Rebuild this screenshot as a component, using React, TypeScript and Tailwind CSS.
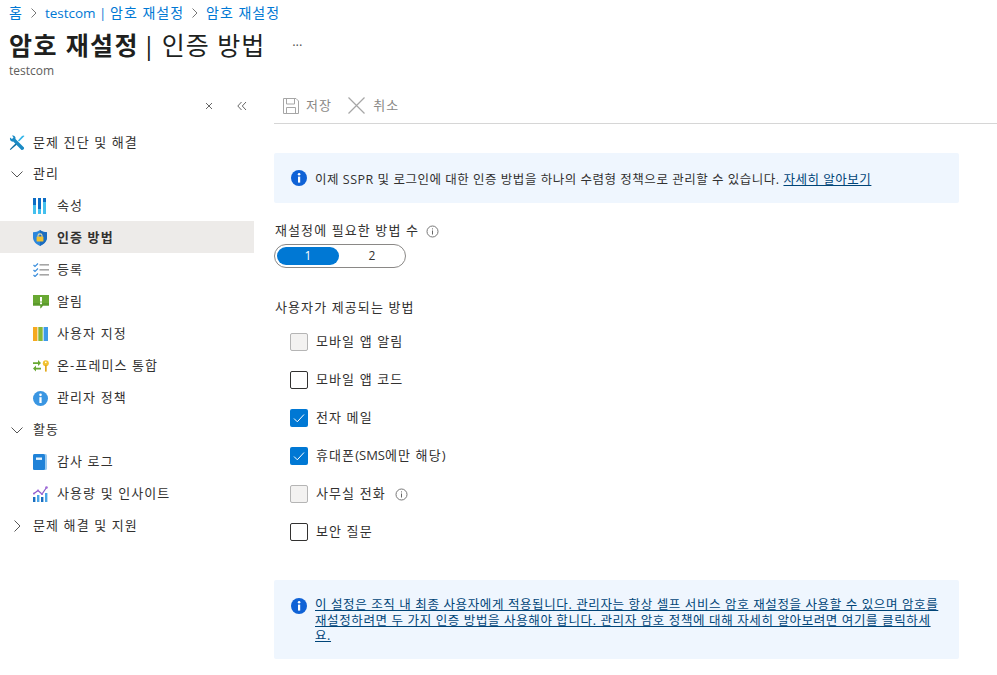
import { ReactNode } from "react";

const font = { fontFamily: '"Open Sans", "Noto Sans CJK KR", sans-serif' };

const InfoCircle = () => (
  <svg width="16" height="16" viewBox="0 0 16 16" className="shrink-0">
    <circle cx="8" cy="8" r="8" fill="#0f62d6" />
    <rect x="7" y="6.6" width="2.2" height="6" fill="#fff" />
    <circle cx="8.1" cy="4.2" r="1.3" fill="#fff" />
  </svg>
);

const SmallInfo = () => (
  <svg width="13" height="13" viewBox="0 0 13 13" className="shrink-0">
    <circle cx="6.5" cy="6.5" r="5.5" fill="none" stroke="#777" />
    <rect x="6" y="5.5" width="1" height="4" fill="#666" />
    <rect x="6" y="3.4" width="1" height="1" fill="#666" />
  </svg>
);

const Tools = () => (
  <svg width="16" height="16" viewBox="0 0 16 16">
    <path d="M1.5 15 L0.8 14.2 L7 8 L8.2 9.2 Z" fill="#0b6a9e" />
    <path d="M10 6.5 L14 2.5 L15.5 1 L14.5 0.5 L13 1 L9 5.5 Z" fill="#30b4e8" />
    <path d="M1 2.5 L3 4 L4.5 2.5 L3 .6 C5 0 7 1.5 6.5 4 L15 12.5 C15.5 14 14 15.5 12.5 15 L4.2 6.6 C2 7 .5 5 1 2.5 Z" fill="#1a8ac4" />
  </svg>
);

const Bars = () => (
  <svg width="13" height="16" viewBox="0 0 13 16">
    <rect x="0" y="0" width="3" height="16" fill="#0c6cc4" />
    <rect x="0" y="7" width="3" height="9" fill="#44c0ee" />
    <rect x="5" y="0" width="3" height="16" fill="#0c6cc4" />
    <rect x="5" y="11" width="3" height="5" fill="#44c0ee" />
    <rect x="10" y="0" width="3" height="16" fill="#0c6cc4" />
    <rect x="10" y="4" width="3" height="12" fill="#44c0ee" />
  </svg>
);

const Shield = () => (
  <svg width="14" height="16" viewBox="0 0 14 16">
    <path d="M7 0 C9 1.6 11 2.2 14 2.2 V7.5 C14 11.5 10.5 14.5 7 16 C3.5 14.5 0 11.5 0 7.5 V2.2 C3 2.2 5 1.6 7 0 Z" fill="#2b86dc" />
    <path d="M7 0 C9 1.6 11 2.2 14 2.2 V7.5 C14 11.5 10.5 14.5 7 16 Z" fill="#1b6cc0" />
    <rect x="3.6" y="6.6" width="6.8" height="5" rx="0.5" fill="#f2c230" />
    <path d="M5 6.8 V5.4 C5 3.4 9 3.4 9 5.4 V6.8" fill="none" stroke="#e8d9a0" strokeWidth="1.1" />
  </svg>
);

const CheckList = () => (
  <svg width="16" height="14" viewBox="0 0 16 14">
    <path d="M.5 2 L2 3.5 L5 .5 M.5 7 L2 8.5 L5 5.5 M.5 12 L2 13.5 L5 10.5" fill="none" stroke="#3c8fdc" strokeWidth="1.2" />
    <rect x="6.5" y="1" width="9.5" height="1.6" fill="#a6a6a6" />
    <rect x="6.5" y="6" width="9.5" height="1.6" fill="#a6a6a6" />
    <rect x="6.5" y="11" width="9.5" height="1.6" fill="#a6a6a6" />
  </svg>
);

const Alert = () => (
  <svg width="16" height="14" viewBox="0 0 16 14">
    <path d="M0 0 H16 V10.5 H10 L7.5 13.5 V10.5 H0 Z" fill="#68a832" />
    <path d="M0 8 H16 V10.5 H10 L7.5 13.5 V10.5 H0 Z" fill="#5b9a2c" />
    <rect x="7" y="2" width="2" height="4.6" fill="#fff" />
    <rect x="7" y="7.4" width="2" height="1.8" fill="#fff" />
  </svg>
);

const Columns = () => (
  <svg width="15" height="14" viewBox="0 0 15 14">
    <rect x="0" y="0" width="4.4" height="14" fill="#f6a91e" />
    <rect x="5.3" y="0" width="4.4" height="14" fill="#86b83a" />
    <rect x="10.6" y="0" width="4.4" height="14" fill="#3d9ae8" />
  </svg>
);

const SyncKey = () => (
  <svg width="16" height="12" viewBox="0 0 16 12">
    <path d="M0 3.2 H5 V1 L8 4 L5 7 V5 H0 Z" fill="#68a832" transform="translate(0 -1)" />
    <path d="M8 8.2 H3 V6 L0 9 L3 12 V10 H8 Z" fill="#68a832" transform="translate(0 -.5)" />
    <circle cx="12.8" cy="3.2" r="3" fill="#f2c230" />
    <rect x="12" y="5" width="1.7" height="6.6" fill="#e3a91c" />
    <circle cx="12.8" cy="2.4" r="0.8" fill="#fff" />
  </svg>
);

const AdminInfo = () => (
  <svg width="15" height="15" viewBox="0 0 16 16">
    <circle cx="8" cy="8" r="8" fill="#3a96e2" />
    <rect x="6.8" y="6.6" width="2.4" height="6.2" fill="#fff" />
    <circle cx="8" cy="4.1" r="1.4" fill="#fff" />
  </svg>
);

const Book = () => (
  <svg width="14" height="16" viewBox="0 0 14 16">
    <rect x="0" y="0" width="14" height="16" rx="1.5" fill="#9ccbf0" />
    <rect x="0" y="0" width="12" height="16" rx="1.5" fill="#1f82d8" />
    <rect x="3" y="3.5" width="6" height="2.4" fill="#e8f3fc" />
  </svg>
);

const Insights = () => (
  <svg width="15" height="16" viewBox="0 0 15 16">
    <rect x="0" y="11" width="2.4" height="5" fill="#1a6fc0" />
    <rect x="4" y="9" width="2.4" height="7" fill="#4aa6e8" />
    <rect x="8" y="11" width="2.4" height="5" fill="#1a6fc0" />
    <rect x="12" y="7" width="2.4" height="9" fill="#4aa6e8" />
    <path d="M1 7.5 L5 4.5 L9 8 L13.5 1.5" fill="none" stroke="#8a5cc8" strokeWidth="1.2" />
    <circle cx="1" cy="7.5" r="1.1" fill="#a06ad8" />
    <circle cx="5" cy="4.5" r="1.1" fill="#a06ad8" />
    <circle cx="9" cy="8" r="1.1" fill="#a06ad8" />
    <circle cx="13.5" cy="1.5" r="1.3" fill="#a06ad8" />
  </svg>
);

const Chevron = ({ open }: { open: boolean }) => (
  <svg width="12" height="12" viewBox="0 0 12 12">
    {open ? (
      <path d="M.5 3.5 L6 9 L11.5 3.5" fill="none" stroke="#555" />
    ) : (
      <path d="M3.5 .5 L9 6 L3.5 11.5" fill="none" stroke="#555" />
    )}
  </svg>
);

const Crumb = () => (
  <svg width="8" height="10" viewBox="0 0 8 10" className="mx-[7px]">
    <path d="M1.5 .5 L6 5 L1.5 9.5" fill="none" stroke="#777" />
  </svg>
);

const TopRow = ({ label }: { label: string }) => (
  <div className="flex h-8 items-center pl-[9px] pt-[4px]">
    <span className="flex w-[24px] shrink-0 items-center">
      <Tools />
    </span>
    <span>{label}</span>
  </div>
);

const GroupRow = ({ label, open }: { label: string; open: boolean }) => (
  <div className="flex h-8 items-center pl-[11px] pt-[2px]">
    <span className="flex w-[22px] shrink-0 items-center">
      <Chevron open={open} />
    </span>
    <span>{label}</span>
  </div>
);

const NavRow = ({
  label,
  icon,
  active,
}: {
  label: string;
  icon: ReactNode;
  active?: boolean;
}) => (
  <div
    className={
      active
        ? "flex h-8 items-center bg-[#edebe9] pl-[33px] pt-[2px] font-bold"
        : "flex h-8 items-center pl-[33px] pt-[2px]"
    }
  >
    <span className="flex w-[24px] shrink-0 items-center">{icon}</span>
    <span>{label}</span>
  </div>
);

const Check = ({
  label,
  state,
  extra,
}: {
  label: ReactNode;
  state: "off" | "on" | "disabled";
  extra?: ReactNode;
}) => (
  <div className="flex h-[38px] items-center pl-4">
    {state === "on" && (
      <span className="flex h-[18px] w-[18px] items-center justify-center rounded-[2px] bg-[#0078d4]">
        <svg width="12" height="12" viewBox="0 0 12 12">
          <path d="M1 6.5 L4.3 9.8 L11 2.5" fill="none" stroke="#fff" strokeWidth="1" />
        </svg>
      </span>
    )}
    {state === "off" && (
      <span className="h-[18px] w-[18px] rounded-[2px] border border-[#323130]" />
    )}
    {state === "disabled" && (
      <span className="h-[18px] w-[18px] rounded-[2px] border border-[#b5b5b5] bg-[#f3f2f1]" />
    )}
    <span className="ml-2">{label}</span>
    {extra}
  </div>
);

export default function App() {
  return (
    <div
      style={font}
      className="h-[675px] w-[997px] overflow-hidden bg-white text-[13px] tracking-[1.1px] text-[#323130]"
    >
      <div className="flex h-6 items-center pl-[9px] pt-[1px] text-[14px] tracking-[1px] text-[#0078d4]">
        <span>홈</span>
        <Crumb />
        <span>
          <span className="text-[13.5px] tracking-normal">testcom | </span>암호 재설정
        </span>
        <Crumb />
        <span>암호 재설정</span>
      </div>
      <div className="flex h-[40px] items-center pl-[9px] pt-[1px] text-[25px] leading-8 tracking-[1.4px] text-[#201f1e]">
        <span className="font-bold">암호 재설정</span>
        <span className="ml-[3px] tracking-normal">|</span>
        <span className="ml-[6px] tracking-[1px]">인증 방법</span>
        <span className="ml-[27px] text-[13px] tracking-normal text-[#555]">···</span>
      </div>
      <div className="pl-[9px] text-[12px] leading-[14px] tracking-normal text-[#605e5c]">testcom</div>

      <div className="mt-[11px] flex">
        <aside className="w-[254px] shrink-0">
          <div className="flex h-[30px] items-center justify-end pr-[7px] pt-[4px] text-[#666]">
            <svg width="8" height="8" viewBox="0 0 8 8" className="mr-[24px]">
              <path d="M1 1 L7 7 M7 1 L1 7" fill="none" stroke="#666" />
            </svg>
            <svg width="10" height="10" viewBox="0 0 10 10">
              <path d="M4.5 1 L.8 5 L4.5 9 M9 1 L5.3 5 L9 9" fill="none" stroke="#666" />
            </svg>
          </div>
          <div className="mt-[6px]">
            <TopRow label="문제 진단 및 해결" />
            <GroupRow label="관리" open />
            <NavRow label="속성" icon={<Bars />} />
            <NavRow label="인증 방법" icon={<Shield />} active />
            <NavRow label="등록" icon={<CheckList />} />
            <NavRow label="알림" icon={<Alert />} />
            <NavRow label="사용자 지정" icon={<Columns />} />
            <NavRow label="온-프레미스 통합" icon={<SyncKey />} />
            <NavRow label="관리자 정책" icon={<AdminInfo />} />
            <GroupRow label="활동" open />
            <NavRow label="감사 로그" icon={<Book />} />
            <NavRow label="사용량 및 인사이트" icon={<Insights />} />
            <GroupRow label="문제 해결 및 지원" open={false} />
          </div>
        </aside>

        <main className="ml-5 min-w-0 flex-1">
          <div className="flex h-[35px] items-center border-b border-[#d6d6d6] pb-[1px] text-[#8a8886]">
            <svg width="16" height="16" viewBox="0 0 16 16" className="ml-[9px] mr-[7px]">
              <path d="M.5 .5 H13 L15.5 3 V15.5 H.5 Z" fill="none" stroke="#a6a6a6" />
              <path d="M3.5 .5 V6 H11.5 V.5 M3.5 15.5 V9.5 H12.5 V15.5" fill="none" stroke="#a6a6a6" />
            </svg>
            <span>저장</span>
            <svg width="17" height="17" viewBox="0 0 17 17" className="ml-4 mr-[8px]">
              <path d="M.5 .5 L16.5 16.5 M16.5 .5 L.5 16.5" fill="none" stroke="#a6a6a6" strokeWidth="1.2" />
            </svg>
            <span>취소</span>
          </div>

          <div className="w-[685px]">
            <div className="mt-[29px] flex h-[50px] items-center rounded-[2px] bg-[#eff6fe] pl-[17px]">
              <InfoCircle />
              <span className="ml-2 pt-[4px] text-[12.5px] tracking-[0.52px]">
                이제 SSPR 및 로그인에 대한 인증 방법을 하나의 수렴형 정책으로 관리할 수 있습니다.{" "}
                <span className="text-[#004578] underline">자세히 알아보기</span>
              </span>
            </div>

            <div className="mt-[19px] flex h-[18px] items-center pl-[1px]">
              <span>재설정에 필요한 방법 수</span>
              <span className="ml-[7px]">
                <SmallInfo />
              </span>
            </div>
            <div className="mt-[4px] flex h-6 w-[132px] items-center rounded-full border border-[#8a8886] p-[2px] tracking-normal">
              <span className="flex h-[18px] w-[62px] shrink-0 items-center justify-center rounded-full bg-[#0078d4] text-[12px] text-white">
                1
              </span>
              <span className="flex h-[18px] w-[64px] shrink-0 items-center justify-center pl-[2px] text-[12px]">2</span>
            </div>

            <div className="mt-[31px] flex h-[18px] items-center pl-[1px]">사용자가 제공되는 방법</div>
            <div className="mt-[6px]">
              <Check label="모바일 앱 알림" state="disabled" />
              <Check label="모바일 앱 코드" state="off" />
              <Check label="전자 메일" state="on" />
              <Check
                label={
                  <>
                    휴대폰<span className="tracking-normal">(SMS</span>에만 해당)
                  </>
                }
                state="on"
              />
              <Check
                label="사무실 전화"
                state="disabled"
                extra={
                  <span className="ml-[9px]">
                    <SmallInfo />
                  </span>
                }
              />
              <Check label="보안 질문" state="off" />
            </div>

            <div className="mt-[29px] flex h-[79px] items-start rounded-[2px] bg-[#eff6fe] pl-[17px] pr-[15px] pt-[17px]">
              <span className="mt-[1px]">
                <InfoCircle />
              </span>
              <span className="ml-2 whitespace-nowrap text-[12.5px] leading-[15.5px] tracking-[0.62px] text-[#004578] underline">
                이 설정은 조직 내 최종 사용자에게 적용됩니다. 관리자는 항상 셀프 서비스 암호 재설정을 사용할 수 있으며 암호를
                <br />
                재설정하려면 두 가지 인증 방법을 사용해야 합니다. 관리자 암호 정책에 대해 자세히 알아보려면 여기를 클릭하세
                <br />요.
              </span>
            </div>
          </div>
        </main>
      </div>
    </div>
  );
}
